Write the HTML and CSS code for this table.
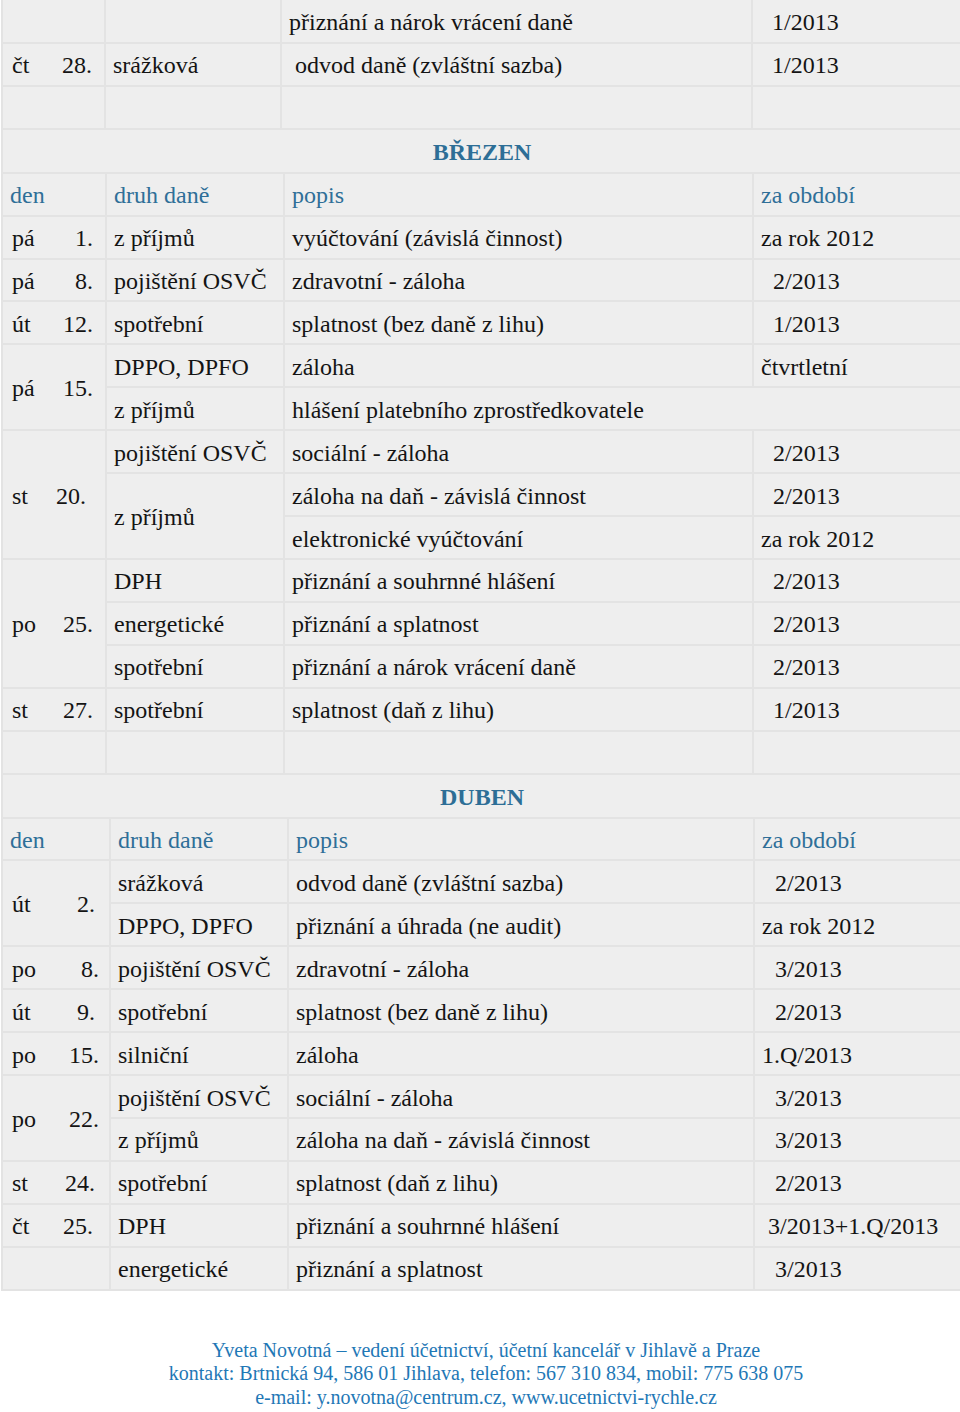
FILE: index.html
```html
<!DOCTYPE html>
<html lang="cs">
<head>
<meta charset="utf-8">
<title>Daňový kalendář</title>
<link rel="stylesheet" href="styles.css">
</head>
<body>
<table class="cal cal-feb">
  <colgroup><col class="c1"><col class="c2"><col class="c3"><col class="c4"></colgroup>
  <tr class="first"><td></td><td></td><td>přiznání a nárok vrácení daně</td><td class="num">1/2013</td></tr>
  <tr><td class="day"><span class="wd">čt</span><span class="dn">28.</span></td><td>srážková</td><td class="sp">odvod daně (zvláštní sazba)</td><td class="num">1/2013</td></tr>
  <tr><td></td><td></td><td></td><td></td></tr>
</table>

<table class="cal cal-mar">
  <colgroup><col class="c1"><col class="c2"><col class="c3"><col class="c4"></colgroup>
  <tr class="first"><td colspan="4" class="month">BŘEZEN</td></tr>
  <tr class="head"><td>den</td><td>druh daně</td><td>popis</td><td>za období</td></tr>
  <tr><td class="day"><span class="wd">pá</span><span class="dn">1.</span></td><td>z příjmů</td><td>vyúčtování (závislá činnost)</td><td>za rok 2012</td></tr>
  <tr><td class="day"><span class="wd">pá</span><span class="dn">8.</span></td><td>pojištění OSVČ</td><td>zdravotní - záloha</td><td class="num">2/2013</td></tr>
  <tr><td class="day"><span class="wd">út</span><span class="dn">12.</span></td><td>spotřební</td><td>splatnost (bez daně z lihu)</td><td class="num">1/2013</td></tr>
  <tr><td class="day" rowspan="2"><span class="wd">pá</span><span class="dn">15.</span></td><td>DPPO, DPFO</td><td>záloha</td><td>čtvrtletní</td></tr>
  <tr><td>z příjmů</td><td colspan="2">hlášení platebního zprostředkovatele</td></tr>
  <tr><td class="day" rowspan="3"><span class="wd">st</span><span class="dn dn-in">20.</span></td><td>pojištění OSVČ</td><td>sociální - záloha</td><td class="num">2/2013</td></tr>
  <tr><td rowspan="2">z příjmů</td><td>záloha na daň - závislá činnost</td><td class="num">2/2013</td></tr>
  <tr><td>elektronické vyúčtování</td><td>za rok 2012</td></tr>
  <tr><td class="day" rowspan="3"><span class="wd">po</span><span class="dn">25.</span></td><td>DPH</td><td>přiznání a souhrnné hlášení</td><td class="num">2/2013</td></tr>
  <tr><td>energetické</td><td>přiznání a splatnost</td><td class="num">2/2013</td></tr>
  <tr><td>spotřební</td><td>přiznání a nárok vrácení daně</td><td class="num">2/2013</td></tr>
  <tr><td class="day"><span class="wd">st</span><span class="dn">27.</span></td><td>spotřební</td><td>splatnost (daň z lihu)</td><td class="num">1/2013</td></tr>
  <tr><td></td><td></td><td></td><td></td></tr>
</table>

<table class="cal cal-apr">
  <colgroup><col class="c1"><col class="c2"><col class="c3"><col class="c4"></colgroup>
  <tr class="first"><td colspan="4" class="month">DUBEN</td></tr>
  <tr class="head"><td>den</td><td>druh daně</td><td>popis</td><td>za období</td></tr>
  <tr><td class="day" rowspan="2"><span class="wd">út</span><span class="dn dn-m">2.</span></td><td>srážková</td><td>odvod daně (zvláštní sazba)</td><td class="num">2/2013</td></tr>
  <tr><td>DPPO, DPFO</td><td>přiznání a úhrada (ne audit)</td><td>za rok 2012</td></tr>
  <tr><td class="day"><span class="wd">po</span><span class="dn">8.</span></td><td>pojištění OSVČ</td><td>zdravotní - záloha</td><td class="num">3/2013</td></tr>
  <tr><td class="day"><span class="wd">út</span><span class="dn dn-m">9.</span></td><td>spotřební</td><td>splatnost (bez daně z lihu)</td><td class="num">2/2013</td></tr>
  <tr><td class="day"><span class="wd">po</span><span class="dn">15.</span></td><td>silniční</td><td>záloha</td><td>1.Q/2013</td></tr>
  <tr><td class="day" rowspan="2"><span class="wd">po</span><span class="dn">22.</span></td><td>pojištění OSVČ</td><td>sociální - záloha</td><td class="num">3/2013</td></tr>
  <tr><td>z příjmů</td><td>záloha na daň - závislá činnost</td><td class="num">3/2013</td></tr>
  <tr><td class="day"><span class="wd">st</span><span class="dn dn-m">24.</span></td><td>spotřební</td><td>splatnost (daň z lihu)</td><td class="num">2/2013</td></tr>
  <tr><td class="day"><span class="wd">čt</span><span class="dn dn-l">25.</span></td><td>DPH</td><td>přiznání a souhrnné hlášení</td><td class="sp">3/2013+1.Q/2013</td></tr>
  <tr><td></td><td>energetické</td><td>přiznání a splatnost</td><td class="num">3/2013</td></tr>
</table>

<footer class="footer">
  <p>Yveta Novotná – vedení účetnictví, účetní kancelář v Jihlavě a Praze</p>
  <p>kontakt: Brtnická 94, 586 01 Jihlava, telefon: 567 310 834, mobil: 775 638 075</p>
  <p>e-mail: y.novotna@centrum.cz, www.ucetnictvi-rychle.cz</p>
</footer>
</body>
</html>
```

FILE: styles.css
```css
html, body {
  margin: 0;
  padding: 0;
  background: #ffffff;
}

body {
  font-family: "Liberation Serif", "Times New Roman", serif;
  color: #141414;
  overflow-x: hidden;
}

.cal {
  border-collapse: collapse;
  table-layout: fixed;
  width: 959px;
  margin-left: 1px;
  background: #eeeeee;
  font-size: 24px;
}

.cal tr {
  height: 42.93px;
}

.cal td {
  border: 2px solid #e3e3e3;
  padding: 3px 6px 0 7px;
  vertical-align: middle;
  white-space: nowrap;
  line-height: 27px;
}

.cal tr.first td {
  border-top: none;
}

.cal td:last-child {
  border-right: none;
}

/* column widths per section */
.cal-feb .c1 { width: 103px; }
.cal-feb .c2 { width: 176px; }
.cal-feb .c3 { width: 471px; }
.cal-mar .c1 { width: 104px; }
.cal-mar .c2 { width: 178px; }
.cal-mar .c3 { width: 469px; }
.cal-apr .c1 { width: 108px; }
.cal-apr .c2 { width: 178px; }
.cal-apr .c3 { width: 466px; }

.cal-apr td {
  padding-left: 7px;
}

.cal .num {
  padding-left: 19px;
}

.cal-apr .num {
  padding-left: 20px;
}

.cal .sp {
  padding-left: 13px;
}

.cal .day {
  padding-left: 9px;
  padding-right: 12px;
}

.wd {
  float: left;
}

.dn {
  float: right;
}

.dn-in {
  margin-right: 7px;
}

.cal-apr .dn-m {
  margin-right: 4px;
}

.cal-apr .dn-l {
  margin-right: 6px;
}

.cal-apr .day {
  padding-right: 10px;
}

.month {
  text-align: center;
  font-weight: bold;
  color: #2d6e96;
}

.head td {
  color: #2f6f98;
}

.footer {
  margin-top: 48px;
  padding-left: 12px;
  text-align: center;
  color: #1f78b6;
  font-size: 20px;
  line-height: 23.5px;
}

.footer p {
  margin: 0;
}
```
